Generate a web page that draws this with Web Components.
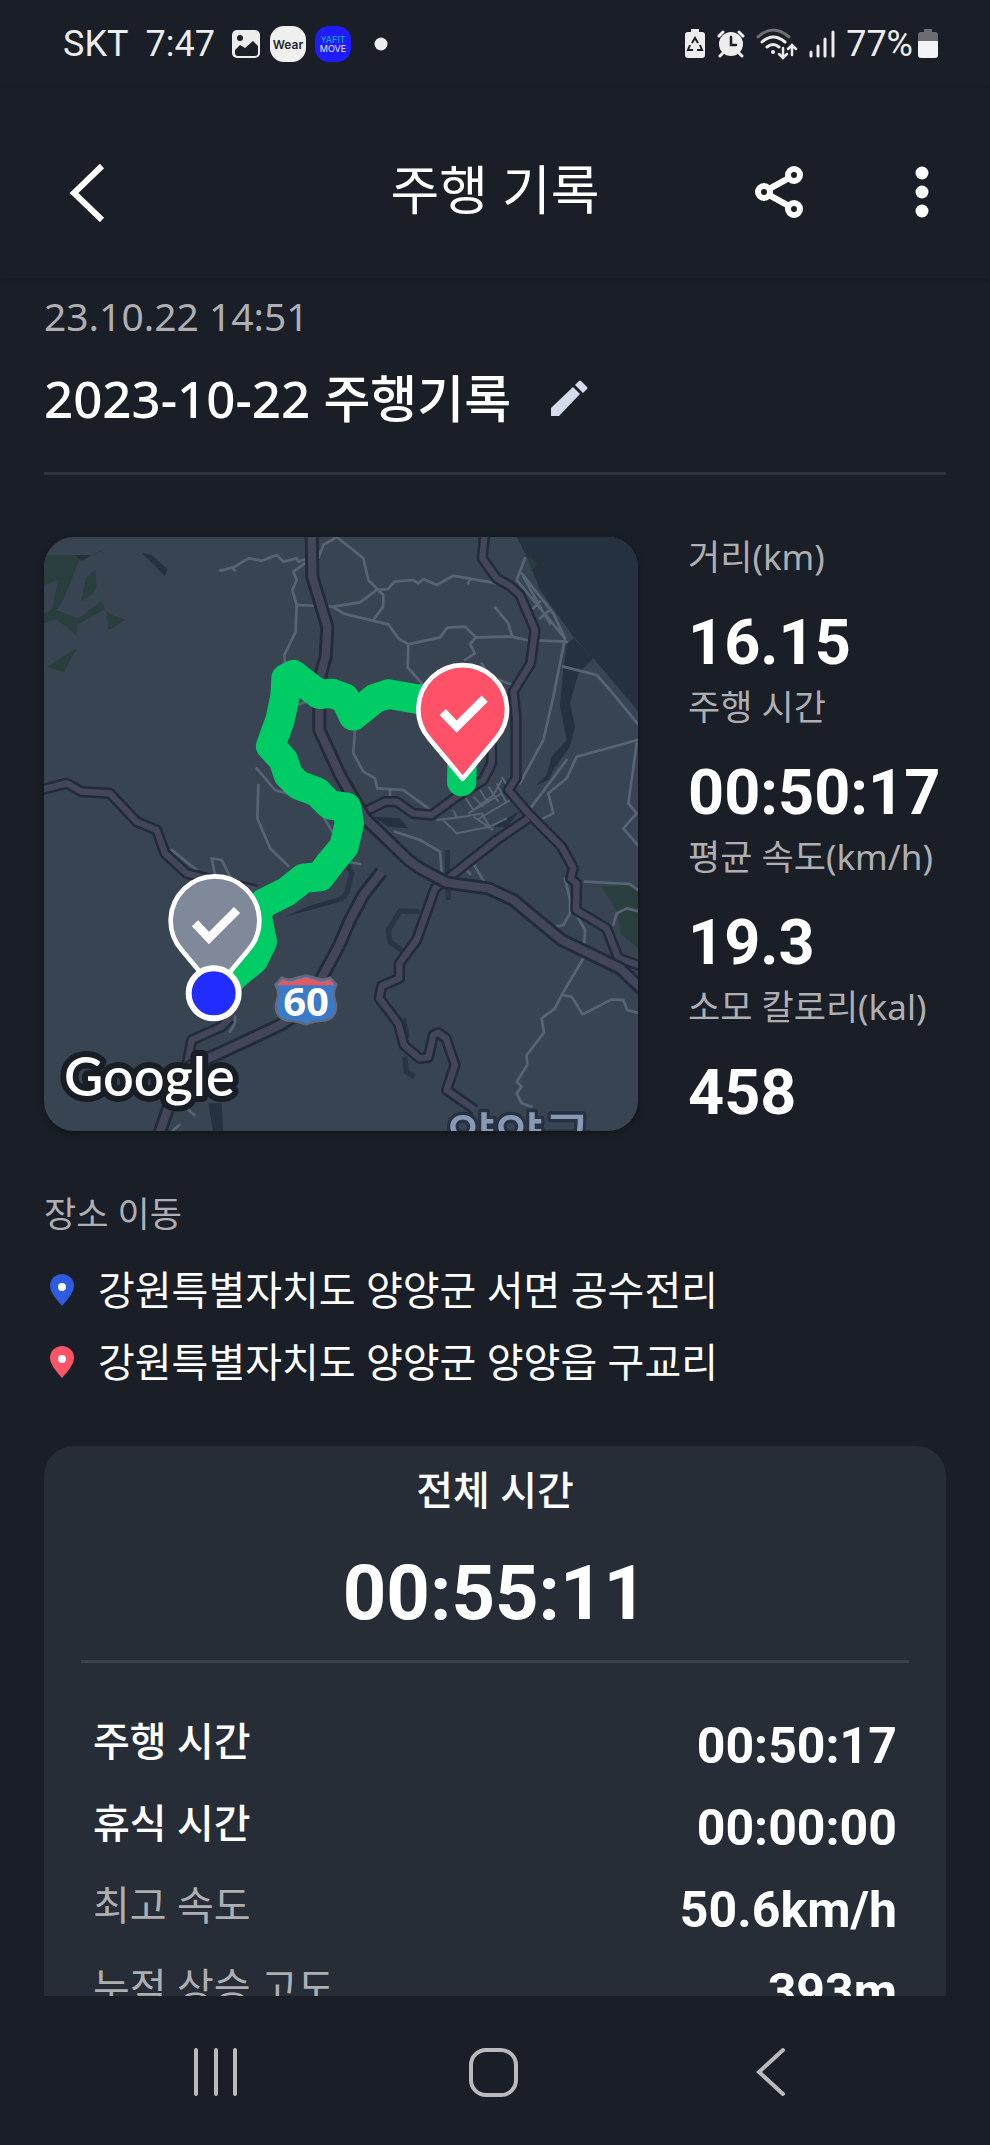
<!DOCTYPE html>
<html lang="ko">
<head>
<meta charset="utf-8">
<meta name="viewport" content="width=device-width, initial-scale=1">
<title>주행 기록</title>
<style>
  body {
    margin: 0;
    height: 100vh;
    background: #1a1e26;
    color: #fff;
    font-family: "Noto Sans", "Noto Sans CJK KR", sans-serif;
    --muted: #aeafb3;
    --card: #272d37;
    --line: #2e333d;
    --number: Roboto, "Noto Sans CJK KR", sans-serif;
  }
</style>
</head>
<body>
<ride-app>
  <ride-title date="23.10.22 14:51">2023-10-22 주행기록</ride-title>
  <ride-overview>
    <ride-map slot="map"></ride-map>
    <ride-stat label="거리(km)">16.15</ride-stat>
    <ride-stat label="주행 시간">00:50:17</ride-stat>
    <ride-stat label="평균 속도(km/h)">19.3</ride-stat>
    <ride-stat label="소모 칼로리(kal)">458</ride-stat>
  </ride-overview>
  <ride-places>
    <ride-place color="#2f5be0">강원특별자치도 양양군 서면 공수전리</ride-place>
    <ride-place color="#ff5468">강원특별자치도 양양군 양양읍 구교리</ride-place>
  </ride-places>
  <ride-summary label="전체 시간" total="00:55:11">
    <summary-row label="주행 시간" strong>00:50:17</summary-row>
    <summary-row label="휴식 시간" strong>00:00:00</summary-row>
    <summary-row label="최고 속도">50.6km/h</summary-row>
    <summary-row label="누적 상승 고도">393m</summary-row>
  </ride-summary>
</ride-app>

<script>
class RideApp extends HTMLElement {
  constructor() {
    super();
    this.attachShadow({ mode: 'open' });
    this.shadowRoot.innerHTML = /*html*/`
      <style>
        :host {
          display: flex;
          flex-direction: column;
          height: 100%;
        }

        main {
          flex: 1;
          min-height: 0;
          overflow-y: auto;
          scrollbar-width: none;
          padding: 0 44px;
        }
      </style>
      <status-bar></status-bar>
      <app-bar>주행 기록</app-bar>
      <main><slot></slot></main>
      <nav-bar></nav-bar>
    `;
  }
}

class StatusBar extends HTMLElement {
  constructor() {
    super();
    this.attachShadow({ mode: 'open' });
    this.shadowRoot.innerHTML = /*html*/`
      <style>
        :host {
          display: flex;
          justify-content: space-between;
          align-items: center;
          height: 88px;
          padding: 0 52px 0 63px;
          color: #ededee;
          font: 36px/40px Roboto, sans-serif;
        }

        div {
          display: flex;
          align-items: center;
        }

        svg { display: block; }
        .left { gap: 9px; }
        .time { margin: 0 7px 0 8px; }
        .dot { margin-left: 14px; }
        .right { gap: 11px; }
        .battery { gap: 5px; }
      </style>
      <div class="left">
        <span>SKT</span>
        <span class="time">7:47</span>
        <svg width="30" height="30" viewBox="0 0 30 30">
          <rect x="1" y="1" width="28" height="28" rx="5" fill="#ededee"/>
          <circle cx="9" cy="9" r="3" fill="#1b1f27"/>
          <path d="M4 21l5-5 5 3 8-7 5 5v7q0 3-3 3H7q-3 0-3-3z" fill="#1b1f27"/>
        </svg>
        <svg width="36" height="36" viewBox="0 0 36 36">
          <rect width="36" height="36" rx="14" fill="#f0f0f0"/>
          <text x="18" y="23" text-anchor="middle" font-family="Inter, sans-serif" font-weight="600" font-size="12" fill="#22262e">Wear</text>
        </svg>
        <svg width="36" height="36" viewBox="0 0 36 36">
          <rect width="36" height="36" rx="14" fill="#1f1cff"/>
          <text x="18" y="17" text-anchor="middle" font-family="Inter, sans-serif" font-size="9" fill="#14b6c9">YAFIT</text>
          <text x="18" y="26" text-anchor="middle" font-family="Inter, sans-serif" font-size="9" fill="#e8e8ff">MOVE</text>
        </svg>
        <svg class="dot" width="14" height="14" viewBox="0 0 14 14"><circle cx="7" cy="7" r="6.5" fill="#ededee"/></svg>
      </div>
      <div class="right">
        <svg width="22" height="30" viewBox="0 0 22 30">
          <path d="M7 0h8v3h3q3 0 3 3v20q0 3-3 3H4q-3 0-3-3V6q0-3 3-3h3z" fill="#ededee"/>
          <path d="M8 14l3-5 3 5M16 16l2 5h-5M9 21H4l2-5" fill="none" stroke="#1b1f27" stroke-width="2"/>
        </svg>
        <svg width="28" height="28" viewBox="0 0 28 28" fill="none" stroke="#ededee" stroke-linecap="round">
          <circle cx="14" cy="14" r="12" fill="#ededee" stroke="none"/>
          <path d="M2 6l4-4M26 6l-4-4M6 23l-3 3M22 23l3 3" stroke-width="3"/>
          <path d="M14 7v8h5" stroke="#1b1f27" stroke-width="2.5"/>
        </svg>
        <svg width="42" height="32" viewBox="0 0 42 32" fill="none" stroke="#ededee" stroke-width="3" stroke-linecap="round">
          <path d="M2 9q15-14 31 0" stroke="#6c6f74"/>
          <path d="M6 14q11-10 23 0M11 19q6-5 12 0"/>
          <circle cx="17" cy="24" r="2" fill="#ededee" stroke="none"/>
          <path d="M27 20v9m-4-3l4 4 4-4M36 27v-9m-4 3l4-4 4 4" stroke-width="2.5"/>
        </svg>
        <svg width="26" height="28" viewBox="0 0 26 28" fill="none" stroke="#ededee" stroke-width="3" stroke-linecap="round">
          <path d="M2 22v4M9 16v10M16 9v17M24 2v24"/>
        </svg>
        <div class="battery">
          <span>77%</span>
          <svg width="20" height="30" viewBox="0 0 20 30">
            <path d="M6 0h8v3h3q3 0 3 3v6H0V6q0-3 3-3h3z" fill="#6c6d72"/>
            <path d="M0 12h20v14q0 3-3 3H3q-3 0-3-3z" fill="#f4f4f4"/>
          </svg>
        </div>
      </div>
    `;
  }
}

class AppBar extends HTMLElement {
  constructor() {
    super();
    this.attachShadow({ mode: 'open' });
    this.shadowRoot.innerHTML = /*html*/`
      <style>
        :host {
          display: grid;
          grid-template-columns: 1fr auto 1fr;
          align-items: center;
          box-sizing: border-box;
          height: 190px;
          padding: 18px 60px 0 60px;
          box-shadow: 0 1px 4px rgba(0, 0, 0, 0.2);
        }

        h1 {
          margin: 0;
          padding-bottom: 4px;
          font-size: 53px;
          line-height: 64px;
          font-weight: 400;
        }

        button {
          display: flex;
          padding: 0;
          border: 0;
          background: none;
          cursor: pointer;
        }

        .actions {
          display: flex;
          justify-content: flex-end;
          gap: 110px;
        }
      </style>
      <button aria-label="뒤로">
        <svg width="50" height="60" viewBox="0 0 50 60" fill="none" stroke="#fff" stroke-width="6"><path d="M42 4L14 31l28 27"/></svg>
      </button>
      <h1><slot></slot></h1>
      <div class="actions">
        <button aria-label="공유">
          <svg width="50" height="52" viewBox="0 0 50 52" fill="none" stroke="#fff" stroke-width="6">
            <path d="M15 23l20-11M15 29l20 11"/>
            <circle cx="10" cy="26" r="6"/><circle cx="40" cy="9" r="6"/><circle cx="40" cy="43" r="6"/>
          </svg>
        </button>
        <button aria-label="더보기">
          <svg width="16" height="52" viewBox="0 0 16 52" fill="#fff"><circle cx="8" cy="7" r="6.5"/><circle cx="8" cy="26" r="6.5"/><circle cx="8" cy="45" r="6.5"/></svg>
        </button>
      </div>
    `;
  }
}

class RideTitle extends HTMLElement {
  constructor() {
    super();
    this.attachShadow({ mode: 'open' });
    this.shadowRoot.innerHTML = /*html*/`
      <style>
        :host {
          display: block;
          padding: 14px 0 42px;
          border-bottom: 3px solid var(--line);
        }

        time {
          display: block;
          color: var(--muted);
          font-size: 39px;
          line-height: 48px;
          font-weight: 400;
        }

        div {
          display: flex;
          align-items: center;
          gap: 38px;
          margin-top: 26px;
        }

        h2 {
          margin: 0;
          font-size: 51px;
          line-height: 64px;
          font-weight: 500;
        }

        button {
          display: flex;
          padding: 0;
          border: 0;
          background: none;
        }
      </style>
      <time>${this.getAttribute('date')}</time>
      <div>
        <h2><slot></slot></h2>
        <button aria-label="제목 수정">
          <svg width="40" height="40" viewBox="0 0 40 40" fill="#d3dbec">
            <path d="M2 30L24 9l7 7-21 22H2z"/><path d="M26 7l4-4q1-1 2 0l6 6q1 1 0 2l-4 4z"/>
          </svg>
        </button>
      </div>
    `;
  }
}

class RideOverview extends HTMLElement {
  constructor() {
    super();
    this.attachShadow({ mode: 'open' });
    this.shadowRoot.innerHTML = /*html*/`
      <style>
        :host {
          display: grid;
          grid-template-columns: minmax(0, 1fr) 258px;
          align-items: start;
          gap: 50px;
          margin-top: 62px;
        }
      </style>
      <slot name="map"></slot>
      <div><slot></slot></div>
    `;
  }
}

class RideStat extends HTMLElement {
  constructor() {
    super();
    this.attachShadow({ mode: 'open' });
    this.shadowRoot.innerHTML = /*html*/`
      <style>
        :host {
          display: block;
          height: 150px;
          white-space: nowrap;
        }

        span {
          display: block;
          color: var(--muted);
          font-size: 35px;
          line-height: 40px;
          font-weight: 400;
        }

        strong {
          display: block;
          margin-top: 31px;
          font: bold 63px/70px var(--number);
        }
      </style>
      <span>${this.getAttribute('label')}</span>
      <strong><slot></slot></strong>
    `;
  }
}

class RideMap extends HTMLElement {
  constructor() {
    super();
    this.attachShadow({ mode: 'open' });

    // 간선도로: 테두리와 안쪽을 두 번 그린다
    const major = `
      <path d="M815 0L817 140L862 290L857 380L838 450V600L900 735L975 865L1105 990L1140 1015L1220 1058L1345 1075L1420 1110L1565 1230L1740 1315L1830 1400"/>
      <path d="M898 1245L850 1335L790 1440L720 1485L560 1560L450 1610L400 1690L355 1820M1025 1025L970 1095L930 1170L898 1245"/>
    `;
    const minor = `
      <path d="M1335 0L1327 85L1370 145L1410 168L1440 195L1485 300L1472 400L1420 485L1428 560V745L1405 780L1465 850L1565 950L1600 1015L1592 1045L1610 1060L1608 1140L1700 1195L1735 1285L1810 1310"/>
      <path d="M975 845L1035 815H1070L1120 850L1175 855L1250 800L1330 750L1355 700V640"/>
      <path d="M1465 865L1370 930L1230 1040L1185 1075L1130 1230L1078 1300V1345L1025 1368L1018 1405L1075 1480L1092 1545L1138 1585L1165 1582L1180 1515L1195 1508L1218 1525L1245 1605L1220 1680L1305 1740"/>
      <path d="M0 780L80 760L125 785L210 790L290 875L350 900L375 970L440 1030L520 1050L650 1080"/>
      <path d="M570 1465L545 1490L455 1530L440 1610"/>
    `;
    const pin = (x, y, color) => `
      <g transform="translate(${x} ${y})">
        <path d="M0 208L-100 88A133 133 0 1 1 100 88Z" fill="${color}" stroke="#fff" stroke-width="14" stroke-linejoin="round"/>
        <path d="M-60 8L-18 52L66 -32" fill="none" stroke="#fff" stroke-width="26"/>
      </g>
    `;

    this.shadowRoot.innerHTML = /*html*/`
      <style>
        :host {
          display: block;
          aspect-ratio: 1;
          border-radius: 30px;
          overflow: hidden;
          background: #394453;
          box-shadow: 0 2px 6px rgba(0, 0, 0, 0.35);
        }

        svg {
          display: block;
          width: 100%;
          height: 100%;
        }
      </style>
      <svg viewBox="12 21 1782 1782" role="img" aria-label="주행 경로 지도">
        <!-- 바다, 강, 저수지 -->
        <g fill="#26313f">
          <path d="M1430 21L1465 90L1500 180L1600 320L1660 385L1800 550V0H1430z"/>
          <path d="M1600 325L1660 385L1615 430L1590 520L1605 590L1590 650L1540 720L1525 750L1485 768L1520 735L1535 680L1580 630L1560 530L1570 415L1580 345z"/>
          <path d="M305 68L335 75L383 118L375 138zM100 75h55l-30 18z"/>
          <path d="M735 1160L800 1130L900 1100V1115L830 1135zM1000 860l80 5 25 30-60-5zM1360 890l80-48-40 50z"/>
          <path d="M505 1720h40l5 90h-30z"/>
        </g>
        <path d="M1138 1145L1080 1143L1045 1200L1050 1235L1110 1280M1222 960l3 150M920 1000l15 30-15 60-20 20M1090 1465l12 60M1095 1580l3 45 25 15" fill="none" stroke="#2a3544" stroke-width="16"/>
        <g fill="#283f3d">
          <path d="M12 75h95l10 18L70 210l-22 30L115 265L185 212l10 25L110 285L112 320L80 290L45 268L12 280V250L35 240L55 150L12 165z"/>
          <path d="M165 118l5 50-12 25-35 22 15-70zM198 240l12 12 45 17-30 22-20 8zM20 410L110 355L72 427zM150 77L212 47L165 73z"/>
          <path d="M1465 80l28 20-20 25zM1685 1070l75-5 40 25v170l-60-50-5-60z"/>
        </g>

        <g fill="none" stroke="#586375" stroke-width="8" stroke-linejoin="round" stroke-linecap="round">
          <path d="M540 122L580 112L625 85L665 92L710 75L730 95L770 85L775 95L830 75L760 125L770 150L757 180L770 225L767 305L733 375L735 400M835 85L850 45L890 21L970 85L985 150L1030 195V230L1000 270M575 112l10 10"/>
          <path d="M770 225L880 230L960 217L1010 180L1045 177L1063 155L1120 150L1135 160L1150 147L1190 165L1240 137L1285 145L1370 160M1290 145l-5 15"/>
          <path d="M880 232L915 252L1045 283L1075 325L1105 343L1200 322L1222 293L1275 290L1308 322L1415 320L1460 330L1580 335M1105 343L1103 412L1150 465M1308 322L1290 342L1305 370L1275 390M1365 232L1405 280L1415 315"/>
          <path d="M1455 85L1430 150L1575 325L1540 500L1510 630L1440 760M1445 130L1540 250L1575 325M1450 140L1500 230L1530 280M1500 265l30-25M1480 235l20-20M1570 410L1670 435L1710 480L1800 590M1800 628L1610 680L1580 745L1525 790L1540 850L1510 865M1580 690L1475 830M1790 640L1765 820L1790 850L1750 895L1810 965"/>
          <path d="M945 600L940 670L970 725L1005 745L1012 775L1090 780L1165 835M1050 780v20M770 525l25-8M650 715L705 780L740 790M655 765L652 865L690 955L745 1008M850 860l30 50"/>
          <path d="M1635 1055L1770 1062L1800 1085M1575 1045L1590 1110V1150L1570 1185L1550 1190M1610 1155L1635 1200L1630 1285L1565 1395L1545 1435L1505 1465L1512 1508L1460 1575L1462 1605L1430 1655L1445 1670L1430 1690L1445 1720L1475 1730M1565 1395L1595 1400L1628 1453L1715 1408L1750 1410L1762 1440L1800 1450M1800 1145L1760 1135L1730 1150L1720 1185"/>
          <path d="M1065 905L1140 930L1200 965L1205 1025M1300 1000L1335 1060M1280 1020l10 12M920 995l40 7M515 985L545 990L570 1040M515 985L525 1035M395 960L470 1020M585 1460v20l-15 25M445 1740l18 15M400 1800l18-15M1325 400l25 40M1350 440l70 25"/>
        </g>
        <!-- 읍내 골목길 -->
        <path d="M1275 800l25 40 60-45 25-45M1300 800l30 30M1320 780l25 40M1345 770l30 45M1285 850l100-60M1310 870l100-60M1190 870l80-10 60-10M1240 840l10 25M1210 870l40 40 100-20 50-25M1325 850l30 50M1300 860l60 40M1370 760l30 60M1385 740l25 40" fill="none" stroke="#586375" stroke-width="6"/>

        <g fill="none" stroke-linejoin="round">
          <g stroke="#222b39" stroke-width="34">${minor}</g>
          <g stroke="#434559" stroke-width="19">${minor}</g>
          <g stroke="#222b39" stroke-width="42">${major}</g>
          <g stroke="#434559" stroke-width="25">${major}</g>
        </g>

        <path d="M1265 755L1268 620L1215 507L1130 507L1045 492L1005 505L940 558L915 505L875 490L838 493L800 465L760 434L738 445L735 500L720 570L692 648L730 690L745 735L775 765L830 785L870 825L920 832L928 880L912 950L870 1000L840 1040L790 1045L740 1085L670 1120L650 1150L667 1235L640 1290L590 1330L530 1390" fill="none" stroke="#00cc66" stroke-width="88" stroke-linejoin="round" stroke-linecap="round"/>

        <g transform="translate(798 1408)">
          <path d="M-72-66Q-50-55-32-64L0-72L32-64Q50-55 72-66L92-44Q78-20 90 12Q96 52 60 64Q20 66 0 76Q-20 66-60 64Q-96 52-90 12Q-78-20-92-44z" fill="#3b79c9" stroke="#666a73" stroke-width="6"/>
          <path d="M-70-60Q-50-48-30-58L0-66L30-58Q50-48 70-60L86-42H-86z" fill="#e05b5f"/>
          <text y="49" text-anchor="middle" font-family="Noto Sans, sans-serif" font-weight="700" font-size="120" fill="#fff">60</text>
        </g>

        ${pin(525, 1172, '#808999')}
        ${pin(1268, 538, '#ff5268')}
        <circle cx="521" cy="1390" r="75" fill="#212cff" stroke="#fff" stroke-width="18"/>

        <path d="M340 1612q40 8 75-8q35 16 60 4q-15 50 5 80q-20 20-65 30q-50-10-75-30q20-40 0-76z" fill="#375f91"/>
        <g paint-order="stroke" stroke-linejoin="round">
          <text x="72" y="1697" font-family="Lato, sans-serif" font-weight="600" font-size="162" fill="#fff" stroke="#191e26" stroke-width="36">Google</text>
          <text x="1222" y="1878" font-family="Noto Sans CJK KR, sans-serif" font-weight="500" font-size="156" fill="#8799b3" stroke="#263242" stroke-width="20">양양군</text>
        </g>
      </svg>
    `;
  }
}

class RidePlaces extends HTMLElement {
  constructor() {
    super();
    this.attachShadow({ mode: 'open' });
    this.shadowRoot.innerHTML = /*html*/`
      <style>
        :host {
          display: block;
          margin-top: 53px;
        }

        h3 {
          margin: 0 0 16px;
          color: var(--muted);
          font-size: 35px;
          line-height: 48px;
          font-weight: 400;
        }
      </style>
      <h3>장소 이동</h3>
      <slot></slot>
    `;
  }
}

class RidePlace extends HTMLElement {
  constructor() {
    super();
    this.attachShadow({ mode: 'open' });
    this.shadowRoot.innerHTML = /*html*/`
      <style>
        :host {
          display: flex;
          align-items: center;
          gap: 22px;
          height: 72px;
          padding-left: 4px;
          font-size: 40px;
          line-height: 48px;
          font-weight: 400;
        }
      </style>
      <svg width="28" height="34" viewBox="0 0 28 34">
        <path d="M14 33Q2 20 2 13A12 12 0 0 1 26 13Q26 20 14 33z" fill="${this.getAttribute('color')}"/>
        <circle cx="14" cy="14" r="4" fill="#fff"/>
      </svg>
      <span><slot></slot></span>
    `;
  }
}

class RideSummary extends HTMLElement {
  constructor() {
    super();
    this.attachShadow({ mode: 'open' });
    this.shadowRoot.innerHTML = /*html*/`
      <style>
        :host {
          display: block;
          margin-top: 48px;
          padding: 20px 37px 40px;
          border-radius: 30px 30px 0 0;
          background: var(--card);
          text-align: center;
        }

        h3 {
          margin: 0;
          font-size: 40px;
          line-height: 48px;
          font-weight: 500;
        }

        strong {
          display: block;
          margin-top: 37px;
          padding-bottom: 25px;
          border-bottom: 3px solid #3b414b;
          font: bold 76px/84px var(--number);
        }

        .rows {
          padding: 37px 12px 0;
        }
      </style>
      <h3>${this.getAttribute('label')}</h3>
      <strong>${this.getAttribute('total')}</strong>
      <div class="rows"><slot></slot></div>
    `;
  }
}

class SummaryRow extends HTMLElement {
  constructor() {
    super();
    this.attachShadow({ mode: 'open' });
    this.shadowRoot.innerHTML = /*html*/`
      <style>
        :host {
          display: flex;
          justify-content: space-between;
          align-items: center;
          height: 82px;
          color: var(--muted);
          font-size: 40px;
          line-height: 48px;
          font-weight: 400;
        }

        :host([strong]) {
          color: #fff;
          font-weight: 500;
        }

        b {
          padding-top: 10px;
          color: #fff;
          font: bold 50px/56px var(--number);
        }
      </style>
      <span>${this.getAttribute('label')}</span>
      <b><slot></slot></b>
    `;
  }
}

class NavBar extends HTMLElement {
  constructor() {
    super();
    this.attachShadow({ mode: 'open' });
    this.shadowRoot.innerHTML = /*html*/`
      <style>
        :host {
          display: flex;
          justify-content: space-around;
          align-items: center;
          height: 149px;
          padding: 0 80px 0 77px;
        }

        button {
          display: flex;
          padding: 0;
          border: 0;
          background: none;
        }

        svg {
          fill: none;
          stroke: #b9babc;
          stroke-width: 4;
          stroke-linecap: round;
        }
      </style>
      <button aria-label="최근 앱"><svg width="52" height="52" viewBox="0 0 52 52"><path d="M6 5v44M26 5v44M45 5v44"/></svg></button>
      <button aria-label="홈"><svg width="52" height="52" viewBox="0 0 52 52"><rect x="4" y="5" width="45" height="45" rx="15"/></svg></button>
      <button aria-label="뒤로"><svg width="52" height="52" viewBox="0 0 52 52"><path d="M38 5L14 27l24 22"/></svg></button>
    `;
  }
}

customElements.define('status-bar', StatusBar);
customElements.define('app-bar', AppBar);
customElements.define('nav-bar', NavBar);
customElements.define('ride-app', RideApp);
customElements.define('ride-title', RideTitle);
customElements.define('ride-overview', RideOverview);
customElements.define('ride-map', RideMap);
customElements.define('ride-stat', RideStat);
customElements.define('ride-places', RidePlaces);
customElements.define('ride-place', RidePlace);
customElements.define('ride-summary', RideSummary);
customElements.define('summary-row', SummaryRow);
</script>
</body>
</html>
